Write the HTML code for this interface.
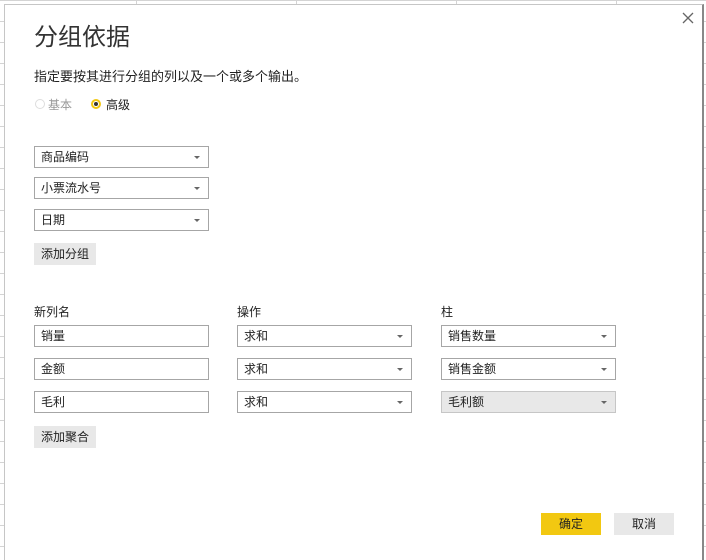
<!DOCTYPE html>
<html style="height:560px;overflow:hidden"><head><meta charset="utf-8"><style>
*{box-sizing:border-box;margin:0;padding:0}
body{width:706px;height:560px;overflow:hidden;background:#fff;position:relative;font-family:"Liberation Sans","Noto Sans CJK SC",sans-serif;color:#333;font-size:12px}
.grid{position:absolute;inset:0;background-image:linear-gradient(#d4d4d4 1px,transparent 1px),linear-gradient(90deg,#d4d4d4 1px,transparent 1px);background-size:100% 21px,160px 100%;background-position:0 0,136px 0}
.dlg{position:absolute;left:4px;top:4px;width:700px;height:556px;background:#fff;border:1px solid #c6c6c6;border-bottom:none;border-right:2px solid #888}
.a{position:absolute}
.sel{position:absolute;width:175px;height:22px;border:1px solid #a6a6a6;background:#fff;padding-left:6px;line-height:20px;font-size:12px;color:#222}
.sel.d::after{content:"";position:absolute;right:8px;top:9px;border:3px solid transparent;border-top:3px solid #666}
.sel.g{background:#e8e8e8;border-color:#c6c6c6}
.btn{position:absolute;height:22px;background:#e8e8e8;text-align:center;line-height:22px;font-size:12px;color:#222}
</style></head><body>
<div class="grid"></div>
<div class="dlg"></div>
<svg class="a" style="left:682px;top:12px" width="12" height="12"><path d="M1 1L11 11M11 1L1 11" stroke="#666" stroke-width="1.3"/></svg>
<div class="a" style="left:34px;top:22px;font-size:24px;color:#333;line-height:32px">分组依据</div>
<div class="a" style="left:34px;top:66px;font-size:13px;color:#222">指定要按其进行分组的列以及一个或多个输出。</div>
<div class="a" style="left:35px;top:99px;width:10px;height:10px;border:1px solid #ddd;border-radius:50%"></div>
<div class="a" style="left:48px;top:96px;color:#999">基本</div>
<div class="a" style="left:91px;top:99px;width:10px;height:10px;border:2px solid #f2c811;border-radius:50%"><div style="position:absolute;left:1px;top:1px;width:4px;height:4px;background:#333;border-radius:50%"></div></div>
<div class="a" style="left:106px;top:96px;color:#222">高级</div>
<div class="sel d" style="left:34px;top:146px">商品编码</div>
<div class="sel d" style="left:34px;top:177px">小票流水号</div>
<div class="sel d" style="left:34px;top:209px">日期</div>
<div class="btn" style="left:34px;top:243px;width:62px">添加分组</div>
<div class="a" style="left:34px;top:303px;color:#222">新列名</div>
<div class="a" style="left:237px;top:303px;color:#222">操作</div>
<div class="a" style="left:441px;top:303px;color:#222">柱</div>
<div class="sel" style="left:34px;top:325px">销量</div>
<div class="sel d" style="left:237px;top:325px">求和</div>
<div class="sel d" style="left:441px;top:325px">销售数量</div>
<div class="sel" style="left:34px;top:358px">金额</div>
<div class="sel d" style="left:237px;top:358px">求和</div>
<div class="sel d" style="left:441px;top:358px">销售金额</div>
<div class="sel" style="left:34px;top:391px">毛利</div>
<div class="sel d" style="left:237px;top:391px">求和</div>
<div class="sel d g" style="left:441px;top:391px">毛利额</div>
<div class="btn" style="left:34px;top:426px;width:62px">添加聚合</div>
<div class="btn" style="left:541px;top:513px;width:60px;background:#f2c811">确定</div>
<div class="btn" style="left:614px;top:513px;width:60px">取消</div>
</body></html>
